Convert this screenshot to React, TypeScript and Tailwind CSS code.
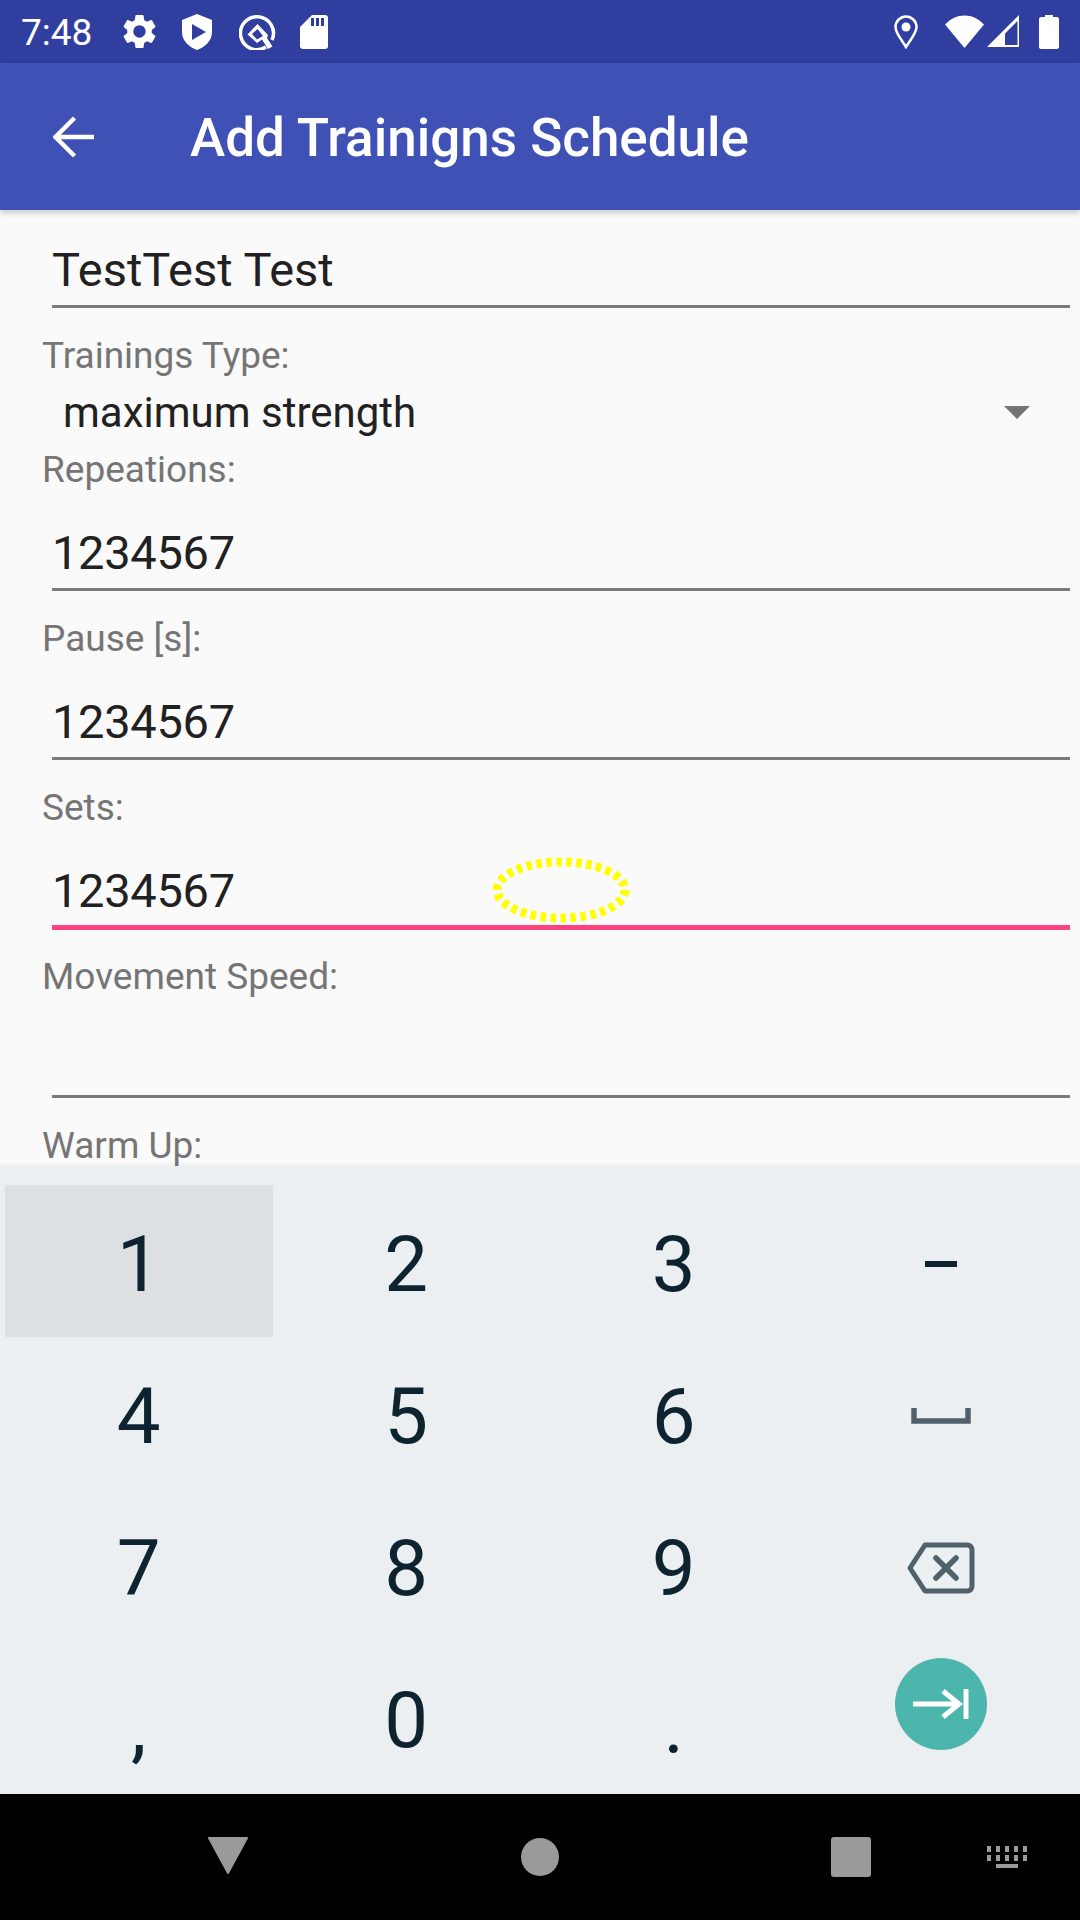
const SET = "M19.14 12.94c.04-.3.06-.61.06-.94 0-.32-.02-.64-.07-.94l2.03-1.58c.18-.14.23-.41.12-.61l-1.92-3.32c-.12-.22-.37-.29-.59-.22l-2.39.96c-.5-.38-1.03-.7-1.62-.94l-.36-2.54c-.04-.24-.24-.41-.48-.41h-3.84c-.24 0-.43.17-.47.41l-.36 2.54c-.59.24-1.13.57-1.62.94l-2.39-.96c-.22-.08-.47 0-.59.22L2.74 8.87c-.12.21-.08.47.12.61l2.03 1.58c-.05.3-.09.63-.09.94s.02.64.07.94l-2.03 1.58c-.18.14-.23.41-.12.61l1.92 3.32c.12.22.37.29.59.22l2.39-.96c.5.38 1.03.7 1.62.94l.36 2.54c.05.24.24.41.48.41h3.84c.24 0 .44-.17.47-.41l.36-2.54c.59-.24 1.13-.56 1.62-.94l2.39.96c.22.08.47 0 .59-.22l1.92-3.32c.12-.22.07-.47-.12-.61l-2.01-1.58zM12 15.6c-1.98 0-3.6-1.62-3.6-3.6s1.62-3.6 3.6-3.6 3.6 1.62 3.6 3.6-1.62 3.6-3.6 3.6z";

function Field({ label, value, active }: { label: string; value?: string; active?: boolean }) {
  return (
    <div className={active ? "mb-[23px]" : "mb-[24px]"}>
      <div className="h-[48px] pl-[42px] text-[37px] leading-[48px] text-[#757575]">{label}</div>
      <div className={`ml-[52px] mr-[10px] pt-[31px] text-[47px] leading-[56px] tracking-[-0.3px] text-[#212121] ${active ? "h-[98px] border-b-[5px] border-[#ff4081]" : "h-[97px] border-b-[3px] border-[#7b7b7b]"}`}>
        {value}
      </div>
    </div>
  );
}

function Key({ children, pressed }: { children: React.ReactNode; pressed?: boolean }) {
  return (
    <div className={`flex h-[152px] items-center justify-center pt-[6px] text-[78px] text-[#0e2330] ${pressed ? "bg-[#dde0e3]" : ""}`}>
      {children}
    </div>
  );
}

export default function App() {
  return (
    <div className="flex h-[1920px] w-[1080px] flex-col overflow-hidden bg-[#fafafa] font-['Roboto',sans-serif]">
      <div className="flex h-[63px] shrink-0 items-center bg-[#303f9f] pl-[21px] pr-[21px] text-white">
        <span className="relative top-[1px] text-[37px] leading-none">7:48</span>
        <svg width="41" height="41" viewBox="0 0 24 24" fill="#fff" className="ml-[27px]"><path d={SET} /></svg>
        <svg width="30" height="36" viewBox="0 0 30 36" className="ml-[22px]"><path d="M15 0L30 6V18C30 27 23 33 15 36C7 33 0 27 0 18V6Z" fill="#fff" /><path d="M10 10L24 18L10 26Z" fill="#303f9f" /></svg>
        <svg width="37" height="37" viewBox="0 0 37 37" fill="none" className="ml-[27px]"><path d="M27 34A16.500 16.500 0 1 1 33 27" stroke="#fff" strokeWidth="3.500" /><path d="M18.500 11L8.500 21.500L18 30L23 26.500L29 36L33.500 33.500L28 25L29 22Z" fill="#fff" /><path d="M13 21L18.500 16L24 23L18 26.500Z" fill="#303f9f" /></svg>
        <svg width="28" height="34" viewBox="0 0 28 34" className="ml-[24px]"><path d="M12 0H25C27 0 28 1 28 3V31C28 33 27 34 25 34H3C1 34 0 33 0 31V12Z" fill="#fff" /><path d="M11 3h3v8h-3zM16 3h3v8h-3zM21 3h3v8h-3z" fill="#303f9f" /></svg>
        <div className="ml-auto flex items-center">
          <svg width="24" height="34" viewBox="0 0 24 34" fill="none" className="mr-[27px]"><path d="M12 32C6.500 23 1.500 18 1.500 12C1.500 6 6.500 1.500 12 1.500C17.500 1.500 22.500 6 22.500 12C22.500 18 17.500 23 12 32Z" stroke="#fff" strokeWidth="2.500" /><circle cx="12" cy="12" r="4.500" fill="#fff" /></svg>
          <svg width="39" height="33" viewBox="0 0 39 33" className="mr-[3px]"><path d="M19.500 33L0 9.500C6 3.500 12 0.500 19.500 0.500C27 0.500 33 3.500 39 9.500Z" fill="#fff" /></svg>
          <svg width="33" height="33" viewBox="0 0 33 33" fill="none" className="mr-[19px]"><path d="M32 0V32H0Z" fill="#fff" /><path d="M18 18.500L30.500 6V30H18Z" fill="#303f9f" /></svg>
          <svg width="20" height="34" viewBox="0 0 20 34"><path d="M6 0H14V2H18C19 2 20 3 20 4V32C20 33 19 34 18 34H2C1 34 0 33 0 32V4C0 3 1 2 2 2H6Z" fill="#fff" /></svg>
        </div>
      </div>

      <div className="z-10 flex h-[147px] shrink-0 items-center bg-[#3f51b5] text-white shadow-[0_3px_6px_rgba(0,0,0,0.18)]">
        <svg width="42" height="42" viewBox="0 0 42 42" fill="none" className="ml-[53px]"><path d="M41 21H3M21.500 2L2.500 21L21.500 40" stroke="#fff" strokeWidth="4.500" /></svg>
        <span className="relative top-[2px] ml-[95px] text-[53px] font-medium leading-none">Add Trainigns Schedule</span>
      </div>

      <div className="relative h-[956px] shrink-0 overflow-hidden">
        <div className="ml-[52px] mr-[10px] h-[98px] pt-[32px] text-[47px] leading-[56px] text-[#212121] border-b-[3px] border-[#7b7b7b]">TestTest Test</div>
        <div className="mt-[23px] h-[48px] pl-[42px] text-[37px] leading-[50px] text-[#757575]">Trainings Type:</div>
        <div className="flex h-[67px] items-center justify-between pl-[63px] pr-[50px] text-[42px] text-[#212121]">
          <span>maximum strength</span>
          <span className="h-0 w-0 border-x-[13px] border-t-[13px] border-x-transparent border-t-[#757575]" />
        </div>
        <Field label="Repeations:" value="1234567" />
        <Field label="Pause [s]:" value="1234567" />
        <Field label="Sets:" value="1234567" active />
        <Field label="Movement Speed:" />
        <Field label="Warm Up:" />
        <svg width="150" height="80" viewBox="0 0 150 80" fill="none" className="absolute left-[486px] top-[640px]">
          <ellipse cx="75" cy="40" rx="64" ry="28" stroke="#ffff00" strokeWidth="9" strokeDasharray="5.500 4.500" />
        </svg>
      </div>

      <div className="z-10 h-[628px] shrink-0 bg-[#eceff1] pl-[5px] pr-[5px] pt-[19px] shadow-[0_-2px_4px_rgba(0,0,0,0.05)]">
        <div className="grid grid-cols-4">
          <Key pressed>1</Key><Key>2</Key><Key>3</Key>
          <Key><span className="block h-[6px] w-[32px] bg-[#0e2330]" /></Key>
          <Key>4</Key><Key>5</Key><Key>6</Key>
          <Key><svg width="60" height="16" viewBox="0 0 60 16" fill="none"><path d="M3 0V13H57V0" stroke="#4f616b" strokeWidth="5.500" /></svg></Key>
          <Key>7</Key><Key>8</Key><Key>9</Key>
          <Key><svg width="68" height="52" viewBox="0 0 68 52" fill="none"><path d="M18 3H60C63 3 65 5 65 8V44C65 47 63 49 60 49H18L3 26Z" stroke="#4f616b" strokeWidth="5" strokeLinejoin="round" /><path d="M29 16L49 36M49 16L29 36" stroke="#4f616b" strokeWidth="5.500" strokeLinecap="round" /></svg></Key>
          <Key><span className="relative top-[6px]">,</span></Key><Key>0</Key><Key><span className="relative top-[6px]">.</span></Key>
          <Key>
            <span className="relative top-[-16px] flex h-[92px] w-[92px] items-center justify-center rounded-full bg-[#4db6ac]">
              <svg width="56" height="30" viewBox="0 0 56 30" fill="none"><path d="M0 15H46M30 2L46 15L30 28M53 0V30" stroke="#fff" strokeWidth="5" /></svg>
            </span>
          </Key>
        </div>
      </div>

      <div className="relative flex h-[126px] shrink-0 bg-black">
        <svg width="42" height="38" viewBox="0 0 42 38" className="absolute left-[207px] top-[42px]"><path d="M2 2H40L21 37Z" fill="#9a9a9a" stroke="#9a9a9a" strokeWidth="2" strokeLinejoin="round" /></svg>
        <span className="absolute left-[521px] top-[44px] h-[38px] w-[38px] rounded-[50%] bg-[#9a9a9a]" />
        <span className="absolute left-[831px] top-[43px] h-[40px] w-[40px] rounded-[3px] bg-[#9a9a9a]" />
        <svg width="42" height="24" viewBox="0 0 42 24" className="absolute left-[987px] top-[52px]" fill="#9a9a9a">
          <path d="M0 0h4v6H0zM9 0h4v6H9zM18 0h4v6h-4zM27 0h4v6h-4zM36 0h4v6h-4zM0 9h4v6H0zM9 9h4v6H9zM18 9h4v6h-4zM27 9h4v6h-4zM36 9h4v6h-4zM9 18h22v4H9z" />
        </svg>
      </div>
    </div>
  );
}
